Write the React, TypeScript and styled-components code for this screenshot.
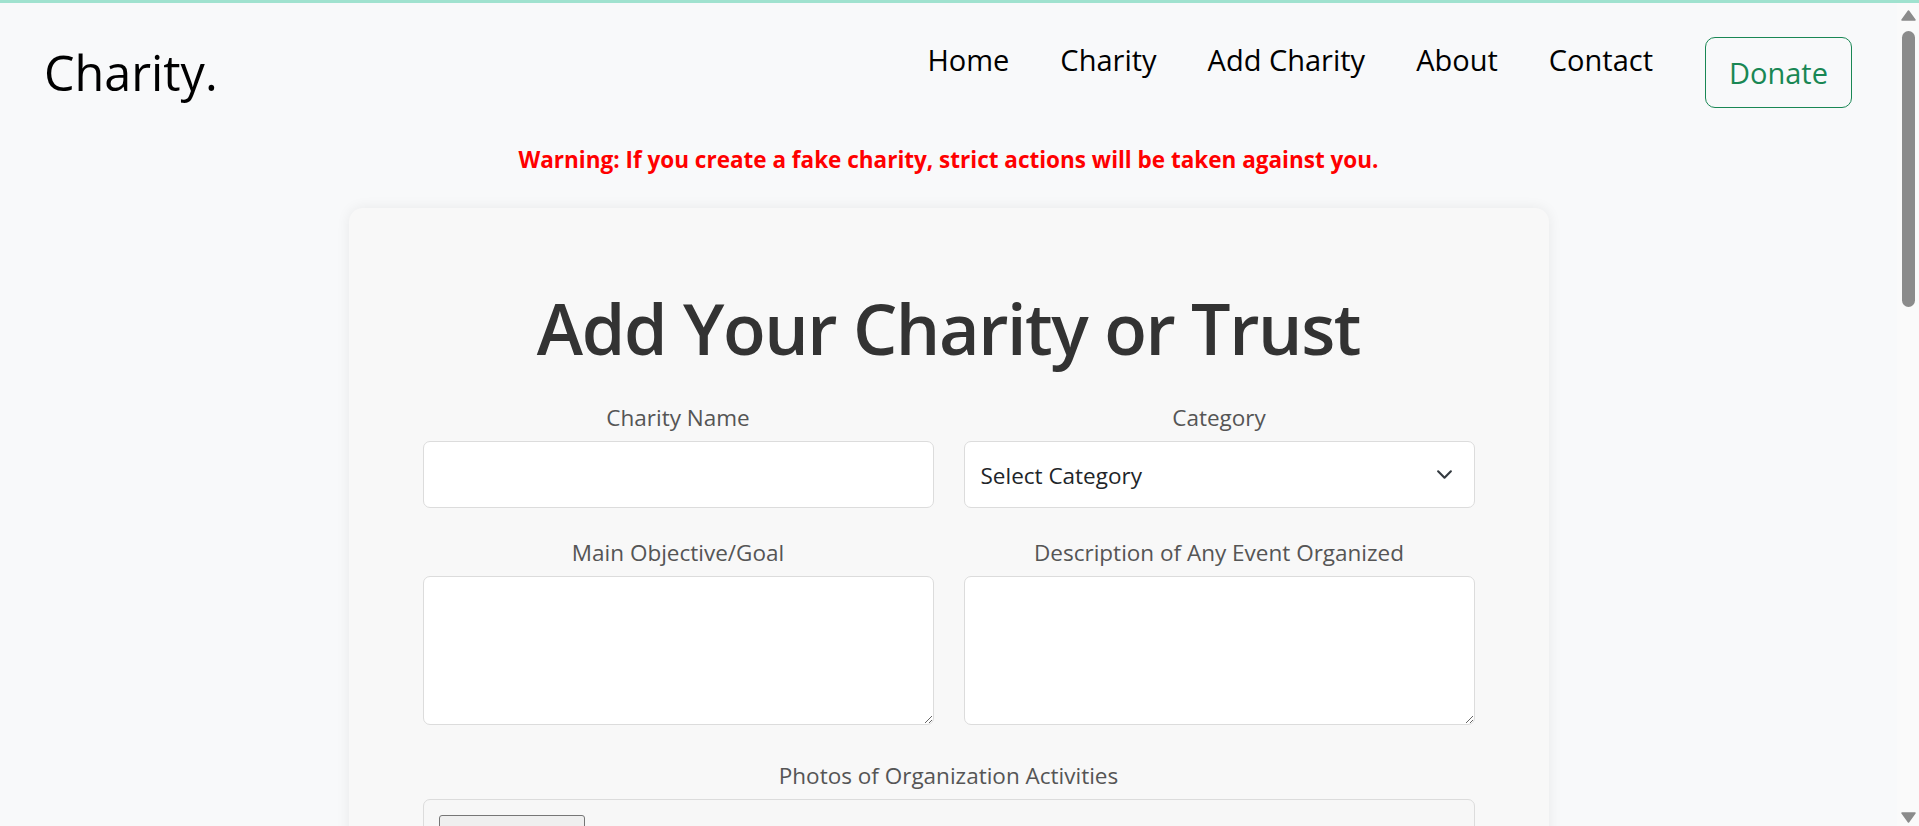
import styled, { createGlobalStyle } from "styled-components";

const GlobalStyle = createGlobalStyle`
  html, body {
    margin: 0;
    overflow: hidden;
  }
  body {
    background: #f8f9fa;
    font-family: "Open Sans", "Noto Sans", sans-serif;
    color: #000;
  }
`;

const TopLine = styled.div`
  height: 3px;
  background: #a0e2cf;
`;

const Frame = styled.div`
  display: flex;
  height: calc(100vh - 3px);
`;

const Scroller = styled.div`
  flex: 1;
  overflow-y: auto;
  scrollbar-width: none;

  &::-webkit-scrollbar {
    display: none;
  }
`;

/* the window's scroll rail, drawn to match the screenshot */
const Rail = styled.div`
  display: flex;
  flex-direction: column;
  align-items: center;
  width: 22px;
  padding: 7px 0 3px;
  box-sizing: border-box;
  background: #fafafa;
`;

const Thumb = styled.div`
  width: 13px;
  height: 276px;
  margin-top: 10px;
  border-radius: 7px;
  background: #8b8b8b;
`;

const RailSpacer = styled.div`
  flex: 1;
`;

const NavBar = styled.nav`
  display: flex;
  justify-content: space-between;
  align-items: flex-start;
  padding: 34px 45px 0 44px;
`;

const Brand = styled.a`
  margin-top: 5px;
  font-size: 48.5px;
  line-height: 1.25;
  color: #000;
  text-decoration: none;
`;

const NavRight = styled.div`
  display: flex;
  align-items: flex-start;
  gap: 52px;
`;

const NavLinks = styled.ul`
  display: flex;
  gap: 51px;
  margin: 0;
  padding: 0;
  list-style: none;
`;

const NavLink = styled.a`
  font-size: 29px;
  line-height: 45px;
  color: #000;
  text-decoration: none;
`;

const DonateButton = styled.button`
  box-sizing: border-box;
  height: 71px;
  padding: 0 23px;
  font-family: inherit;
  font-size: 29px;
  color: #198754;
  background: transparent;
  border: 1px solid #198754;
  border-radius: 10px;
`;

const Warning = styled.p`
  margin: 37px 0 0;
  text-align: center;
  font-size: 22.5px;
  line-height: 30px;
  font-weight: 700;
  color: #ff0000;
`;

const Card = styled.div`
  box-sizing: border-box;
  width: 1200px;
  margin: 33px auto 80px;
  padding: 72px 74px 60px;
  background: #f8f8f8;
  border-radius: 14px;
  box-shadow: 0 0 14px rgba(0, 0, 0, 0.07);
`;

const Heading = styled.h1`
  margin: 0 0 27px;
  padding-top: 2px;
  text-align: center;
  font-size: 70px;
  line-height: 92px;
  letter-spacing: -1.4px;
  font-weight: 600;
  color: #333;
`;

const FormGrid = styled.form`
  display: grid;
  grid-template-columns: 1fr 1fr;
  column-gap: 30px;
  row-gap: 28px;
`;

const Field = styled.div<{ $wide?: boolean; $offset?: number }>`
  display: flex;
  flex-direction: column;
  grid-column: ${(p) => (p.$wide ? "1 / -1" : "auto")};
  margin-top: ${(p) => p.$offset ?? 0}px;
`;

const Label = styled.label`
  margin-bottom: 7px;
  text-align: center;
  font-size: 22.5px;
  line-height: 33px;
  color: #555;
`;

const TextInput = styled.input`
  box-sizing: border-box;
  height: 67px;
  padding: 0 16px;
  font-family: inherit;
  font-size: 22px;
  background: #fff;
  border: 1px solid #dcdcdc;
  border-radius: 7px;
`;

const SelectWrap = styled.div`
  position: relative;
`;

const Select = styled.select`
  box-sizing: border-box;
  width: 100%;
  height: 67px;
  padding: 2px 16px 0;
  font-family: inherit;
  font-size: 22.5px;
  color: #212529;
  background: #fff;
  border: 1px solid #dcdcdc;
  border-radius: 7px;
  appearance: none;
`;

const Chevron = styled.svg`
  position: absolute;
  right: 22px;
  top: 25px;
  width: 17px;
  height: 17px;
  pointer-events: none;
`;

const TextArea = styled.textarea`
  box-sizing: border-box;
  height: 149px;
  padding: 12px 16px;
  font-family: inherit;
  font-size: 22px;
  background: #fff;
  border: 1px solid #dcdcdc;
  border-radius: 7px;
`;

const FileBox = styled.div`
  display: flex;
  align-items: center;
  gap: 12px;
  padding: 15px;
  background: #f7f7f7;
  border: 1px solid #dcdcdc;
  border-radius: 7px;
  font-size: 20px;
  color: #333;
`;

const FileButton = styled.button`
  box-sizing: border-box;
  width: 146px;
  height: 40px;
  font-family: inherit;
  font-size: 18px;
  background: #efefef;
  border: 1px solid #767676;
  border-radius: 3px;
`;

const SubmitButton = styled.button`
  grid-column: 1 / -1;
  justify-self: center;
  margin-top: 20px;
  padding: 12px 48px;
  font-family: inherit;
  font-size: 24px;
  color: #fff;
  background: #198754;
  border: none;
  border-radius: 10px;
`;

const links = ["Home", "Charity", "Add Charity", "About", "Contact"];

const Arrow = ({ down }: { down?: boolean }) => (
  <svg width="15" height="11" viewBox="0 0 15 11">
    <polygon
      points={down ? "1,1 14,1 7.5,10" : "7.5,1 14,10 1,10"}
      fill="#8b8b8b"
      stroke="#8b8b8b"
      strokeWidth="1.5"
      strokeLinejoin="round"
    />
  </svg>
);

export default function App() {
  return (
    <>
      <GlobalStyle />
      <TopLine />
      <Frame>
        <Scroller>
          <NavBar>
            <Brand href="#">Charity.</Brand>
            <NavRight>
              <NavLinks>
                {links.map((l) => (
                  <li key={l}>
                    <NavLink href="#">{l}</NavLink>
                  </li>
                ))}
              </NavLinks>
              <DonateButton type="button">Donate</DonateButton>
            </NavRight>
          </NavBar>

          <Warning>Warning: If you create a fake charity, strict actions will be taken against you.</Warning>

          <Card>
            <Heading>Add Your Charity or Trust</Heading>
            <FormGrid>
              <Field>
                <Label>Charity Name</Label>
                <TextInput type="text" />
              </Field>
              <Field>
                <Label>Category</Label>
                <SelectWrap>
                  <Select defaultValue="">
                    <option value="">Select Category</option>
                    <option>Education</option>
                    <option>Health</option>
                    <option>Environment</option>
                    <option>Animal Welfare</option>
                  </Select>
                  <Chevron viewBox="0 0 16 16">
                    <path d="M2 5l6 6 6-6" fill="none" stroke="#343a40" strokeWidth="2" strokeLinecap="round" strokeLinejoin="round" />
                  </Chevron>
                </SelectWrap>
              </Field>
              <Field>
                <Label>Main Objective/Goal</Label>
                <TextArea />
              </Field>
              <Field>
                <Label>Description of Any Event Organized</Label>
                <TextArea />
              </Field>
              <Field $wide $offset={6}>
                <Label>Photos of Organization Activities</Label>
                <FileBox>
                  <FileButton type="button">Choose Files</FileButton>
                  No file chosen
                </FileBox>
              </Field>
              <Field>
                <Label>Contact Email</Label>
                <TextInput type="email" />
              </Field>
              <Field>
                <Label>Phone Number</Label>
                <TextInput type="tel" />
              </Field>
              <Field $wide>
                <Label>Address</Label>
                <TextArea />
              </Field>
              <Field>
                <Label>Registration Number</Label>
                <TextInput type="text" />
              </Field>
              <Field>
                <Label>Website</Label>
                <TextInput type="text" />
              </Field>
              <Field $wide>
                <Label>Bank Account Details</Label>
                <TextArea />
              </Field>
              <SubmitButton type="submit">Submit</SubmitButton>
            </FormGrid>
          </Card>
        </Scroller>
        <Rail>
          <Arrow />
          <Thumb />
          <RailSpacer />
          <Arrow down />
        </Rail>
      </Frame>
    </>
  );
}
